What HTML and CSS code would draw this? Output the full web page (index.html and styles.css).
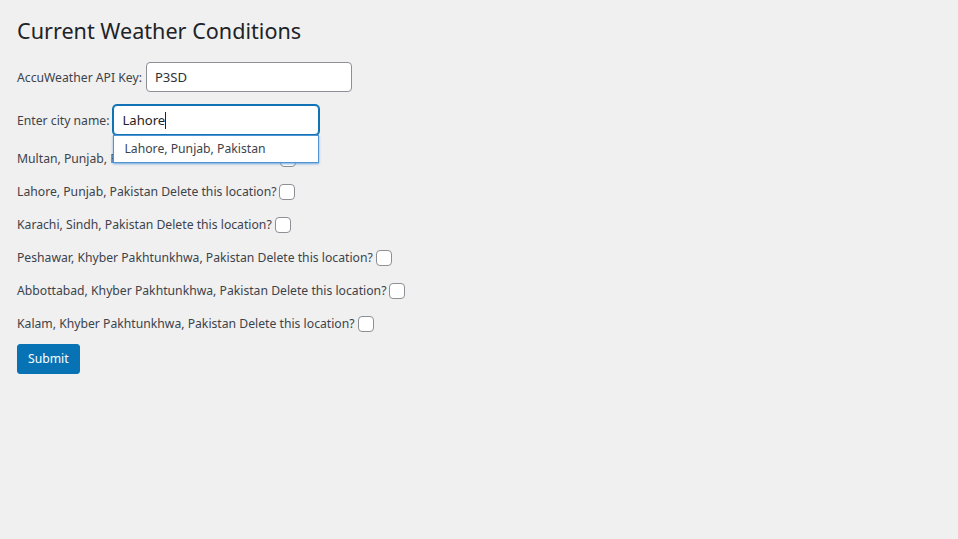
FILE: index.html
```html
<!DOCTYPE html>
<html>
<head>
<meta charset="utf-8">
<link rel="stylesheet" href="styles.css">
</head>
<body>
<div class="wrap">
  <h1 class="title">Current Weather Conditions</h1>
  <form class="form">
    <div class="row key-row">
      <label class="lbl">AccuWeather API Key:</label>
      <input class="text-input key" type="text" value="P3SD">
    </div>
    <div class="row city-row">
      <label class="lbl">Enter city name:</label>
      <div class="city-wrap">
        <div class="text-input city">Lahore<span class="caret"></span></div>
        <ul class="autocomplete">
          <li class="ac-item">Lahore, Punjab, Pakistan</li>
        </ul>
      </div>
    </div>
    <div class="loc"><span>Multan, Punjab, Pakistan Delete this location?</span><span class="cb"></span></div>
    <div class="loc"><span>Lahore, Punjab, Pakistan Delete this location?</span><span class="cb"></span></div>
    <div class="loc"><span>Karachi, Sindh, Pakistan Delete this location?</span><span class="cb"></span></div>
    <div class="loc"><span>Peshawar, Khyber Pakhtunkhwa, Pakistan Delete this location?</span><span class="cb"></span></div>
    <div class="loc"><span>Abbottabad, Khyber Pakhtunkhwa, Pakistan Delete this location?</span><span class="cb"></span></div>
    <div class="loc"><span>Kalam, Khyber Pakhtunkhwa, Pakistan Delete this location?</span><span class="cb"></span></div>
    <div class="submit-row"><button type="button" class="btn">Submit</button></div>
  </form>
</div>
</body>
</html>
```
FILE: styles.css
```css
html, body {
  margin: 0;
  padding: 0;
  background: #f0f0f1;
}
body {
  font-family: "Noto Sans", "Open Sans", sans-serif;
  font-size: 12.2px;
  line-height: 19px;
  color: #3c434a;
}
.wrap {
  padding: 5px 17px 0 17px;
}
.title {
  font-size: 21.6px;
  font-weight: 400;
  color: #1d2327;
  margin: 0;
  padding: 11px 0 2px;
  line-height: 30px;
}
.form {
  margin: 0;
}
.row {
  display: flex;
  align-items: center;
}
.key-row {
  margin-top: 14px;
}
.city-row {
  margin-top: 13px;
}
.lbl {
  margin-right: 4px;
}
.key {
  margin-left: 1px;
}
.text-input {
  box-sizing: border-box;
  width: 206px;
  height: 30px;
  border: 1px solid #8c8f94;
  border-radius: 4px;
  background: #fff;
  font-family: inherit;
  font-size: 13.1px;
  color: #2c3338;
  padding: 0 8px;
  margin: 0;
  outline: none;
}
.city-wrap {
  position: relative;
}
.city {
  display: flex;
  align-items: center;
  border-color: #0f72b4;
  box-shadow: 0 0 0 1px #0f72b4;
  color: #1d2327;
}
.caret {
  display: inline-block;
  width: 1px;
  height: 17px;
  background: #1d2327;
}
.autocomplete {
  position: absolute;
  left: 0;
  top: 30px;
  box-sizing: border-box;
  width: 206px;
  margin: 0;
  padding: 0;
  list-style: none;
  background: #fff;
  border: 1px solid #4f94d4;
  box-shadow: 0 1px 2px rgba(79, 148, 212, 0.8);
  z-index: 10;
}
.ac-item {
  padding: 4px 10px;
  line-height: 18px;
  white-space: nowrap;
  color: #3c434a;
}
.loc {
  display: flex;
  align-items: center;
  gap: 3px;
  height: 20px;
  margin-top: 13px;
}
.cb {
  display: block;
  box-sizing: border-box;
  width: 16px;
  height: 16px;
  border: 1px solid #8c8f94;
  border-radius: 4px;
  background: #fff;
  margin-top: 1px;
}
.submit-row {
  margin-top: 11px;
}
.btn {
  display: block;
  font-family: inherit;
  font-size: 12.2px;
  color: #fff;
  background: #0873b4;
  border: 1px solid #0873b4;
  border-radius: 3px;
  height: 30px;
  padding: 0 10px;
  line-height: 28px;
  cursor: pointer;
}
```
